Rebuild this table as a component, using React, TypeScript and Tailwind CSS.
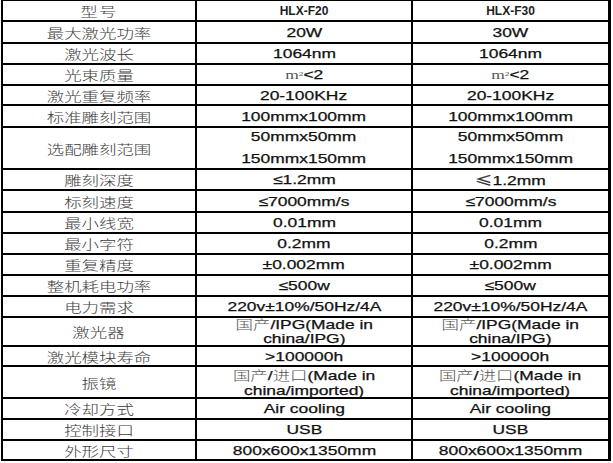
import React from "react";

type Cell = React.ReactNode;

const CJK = "font-['Noto_Sans_CJK_SC',sans-serif] font-light text-[#3c3c3c]";
const LAT =
  "font-['Liberation_Sans','Noto_Sans_CJK_SC',sans-serif] text-[#111] [-webkit-text-stroke:0.25px_#111]";

function Wide({ children, className = "" }: { children: React.ReactNode; className?: string }) {
  return (
    <span className={`inline-block whitespace-nowrap scale-x-[1.34] ${className}`}>{children}</span>
  );
}

const Cn = ({ t }: { t: string }) => (
  <span className="font-['Noto_Sans_CJK_SC',sans-serif] font-light text-[#555] [-webkit-text-stroke:0px]">
    {t}
  </span>
);

const M2 = () => (
  <>
    <span className="font-['Liberation_Serif',serif] text-[#555] text-[13px] [-webkit-text-stroke:0px]">
      m<sup className="text-[7px]">2</sup>
    </span>
    <span>&lt;2</span>
  </>
);

const rows: { label: string; a: Cell; b: Cell; h: string; lh?: string }[] = [
  { label: "最大激光功率", a: "20W", b: "30W", h: "20" },
  { label: "激光波长", a: "1064nm", b: "1064nm", h: "19" },
  { label: "光束质量", a: <M2 />, b: <M2 />, h: "19" },
  { label: "激光重复频率", a: "20-100KHz", b: "20-100KHz", h: "18" },
  { label: "标准雕刻范围", a: "100mmx100mm", b: "100mmx100mm", h: "20" },
  {
    label: "选配雕刻范围",
    a: (
      <>
        50mmx50mm
        <br />
        150mmx150mm
      </>
    ),
    b: (
      <>
        50mmx50mm
        <br />
        150mmx150mm
      </>
    ),
    h: "40",
    lh: "leading-[22px]",
  },
  {
    label: "雕刻深度",
    a: "≤1.2mm",
    b: (
      <>
        <span className="font-['Noto_Sans_CJK_SC',sans-serif] text-[#333]">≤</span>1.2mm
      </>
    ),
    h: "19",
  },
  { label: "标刻速度", a: "≤7000mm/s", b: "≤7000mm/s", h: "20" },
  { label: "最小线宽", a: "0.01mm", b: "0.01mm", h: "19" },
  { label: "最小字符", a: "0.2mm", b: "0.2mm", h: "19" },
  { label: "重复精度", a: "±0.002mm", b: "±0.002mm", h: "19" },
  { label: "整机耗电功率", a: "≤500w", b: "≤500w", h: "19" },
  { label: "电力需求", a: "220v±10%/50Hz/4A", b: "220v±10%/50Hz/4A", h: "19" },
  {
    label: "激光器",
    a: (
      <>
        <Cn t="国产" />/IPG(Made in
        <br />
        china/IPG)
      </>
    ),
    b: (
      <>
        <Cn t="国产" />/IPG(Made in
        <br />
        china/IPG)
      </>
    ),
    h: "27",
    lh: "leading-[14px]",
  },
  { label: "激光模块寿命", a: ">100000h", b: ">100000h", h: "18" },
  {
    label: "振镜",
    a: (
      <>
        <Cn t="国产" />/<Cn t="进口" />(Made in
        <br />
        china/imported)
      </>
    ),
    b: (
      <>
        <Cn t="国产" />/<Cn t="进口" />(Made in
        <br />
        china/imported)
      </>
    ),
    h: "30",
    lh: "leading-[15px]",
  },
  { label: "冷却方式", a: "Air cooling", b: "Air cooling", h: "19" },
  { label: "控制接口", a: "USB", b: "USB", h: "19" },
  { label: "外形尺寸", a: "800x600x1350mm", b: "800x600x1350mm", h: "18" },
];

const heightClass: Record<string, string> = {
  "18": "h-[18px]",
  "19": "h-[19px]",
  "20": "h-[20px]",
  "27": "h-[27px]",
  "30": "h-[30px]",
  "40": "h-[40px]",
};

export default function App() {
  return (
    <div className="w-[613px] h-[463px] bg-white overflow-hidden">
      <div className="ml-[1px] w-[610px] bg-black pt-[1px] px-[2px] pb-[2px] grid grid-cols-[192px_214px_195px] gap-[2px]">
        {/* header */}
        <div className="h-[19px] bg-white flex items-center justify-center">
          <Wide className={`${CJK} text-[13px] leading-none tracking-[1px]`}>型号</Wide>
        </div>
        <div className="h-[19px] bg-white flex items-center justify-center">
          <span className="inline-block font-['Liberation_Sans',sans-serif] font-bold text-[12px] leading-none text-[#222]">
            HLX-F20
          </span>
        </div>
        <div className="h-[19px] bg-white flex items-center justify-center">
          <span className="inline-block font-['Liberation_Sans',sans-serif] font-bold text-[12px] leading-none text-[#222]">
            HLX-F30
          </span>
        </div>
        {rows.map((r, i) => (
          <React.Fragment key={i}>
            <div className={`${heightClass[r.h]} bg-white flex items-center justify-center`}>
              <Wide className={`${CJK} text-[13px] leading-none`}>{r.label}</Wide>
            </div>
            <div className={`${heightClass[r.h]} bg-white flex items-center justify-center`}>
              <Wide className={`${LAT} text-[13px] text-center ${r.lh ?? "leading-none"}`}>{r.a}</Wide>
            </div>
            <div className={`${heightClass[r.h]} bg-white flex items-center justify-center`}>
              <Wide className={`${LAT} text-[13px] text-center ${r.lh ?? "leading-none"}`}>{r.b}</Wide>
            </div>
          </React.Fragment>
        ))}
      </div>
    </div>
  );
}
